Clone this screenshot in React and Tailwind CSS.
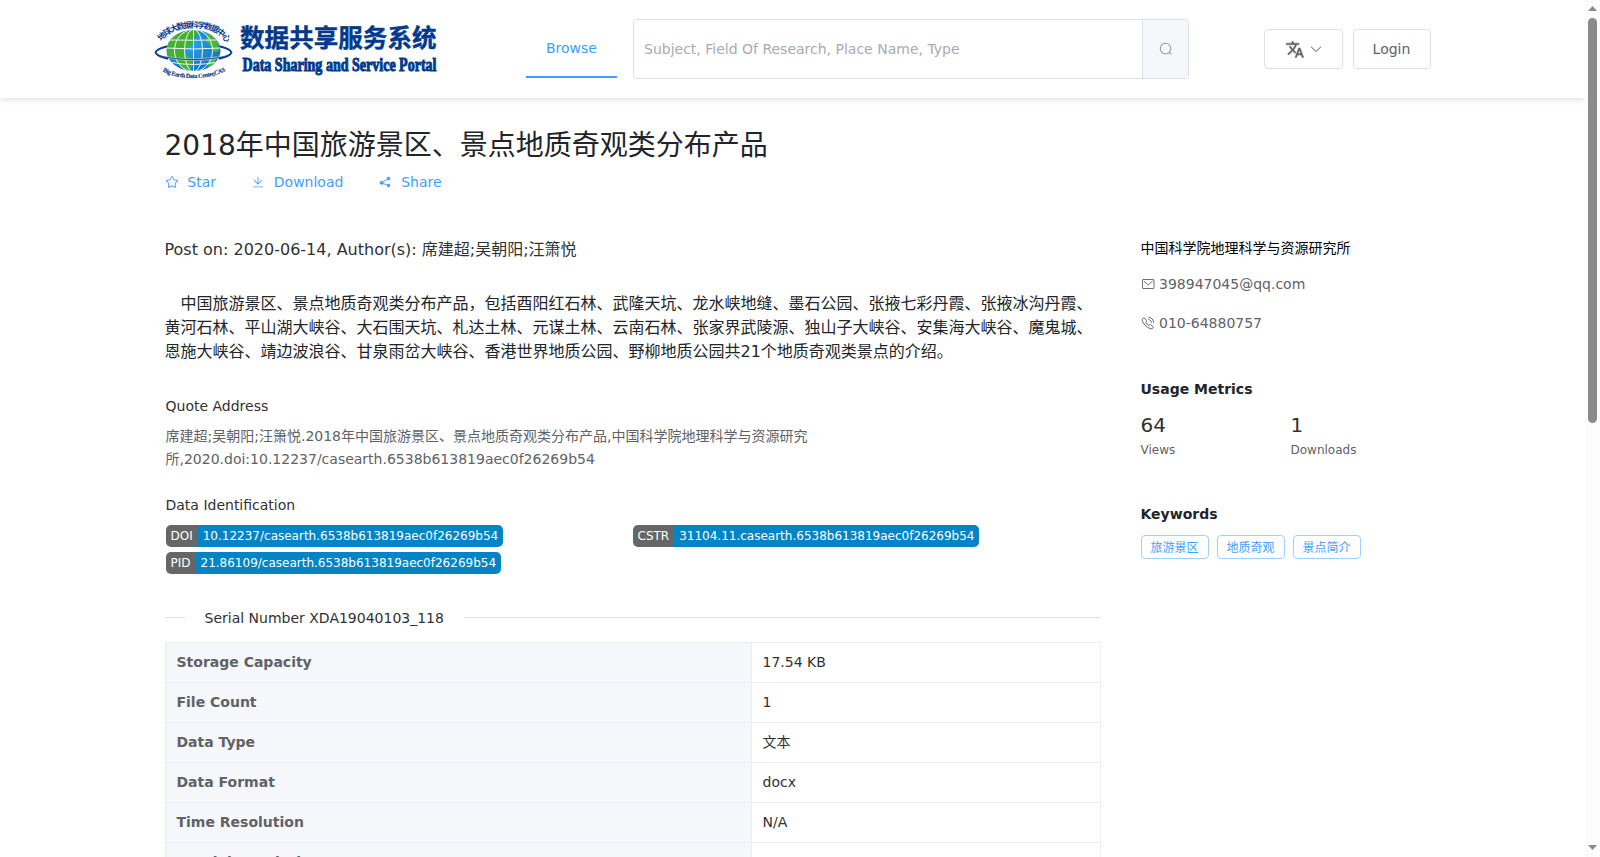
import React from "react";

const paths = {
  search:
    "m795.904 750.72 124.992 124.928a32 32 0 0 1-45.248 45.248L750.656 795.904a416 416 0 1 1 45.248-45.248zM480 832a352 352 0 1 0 0-704 352 352 0 0 0 0 704",
  arrowDown:
    "M831.872 340.864 512 652.672 192.128 340.864a30.592 30.592 0 0 0-42.752 0 29.12 29.12 0 0 0 0 41.6L489.664 714.24a32 32 0 0 0 44.672 0l340.288-331.712a29.12 29.12 0 0 0 0-41.728 30.592 30.592 0 0 0-42.752 0z",
  star:
    "m512 747.84 228.16 119.936a6.4 6.4 0 0 0 9.28-6.72l-43.52-254.08 184.512-179.904a6.4 6.4 0 0 0-3.52-10.88l-255.104-37.12L517.76 147.904a6.4 6.4 0 0 0-11.52 0L392.192 379.072l-255.104 37.12a6.4 6.4 0 0 0-3.52 10.88L318.08 606.976l-43.584 254.08a6.4 6.4 0 0 0 9.28 6.72zM313.6 924.48a70.4 70.4 0 0 1-102.144-74.24l37.888-220.928L88.96 472.96A70.4 70.4 0 0 1 128 352.896l221.76-32.256 99.2-200.96a70.4 70.4 0 0 1 126.208 0l99.2 200.96 221.824 32.256a70.4 70.4 0 0 1 39.04 120.064L774.72 629.376l37.888 220.928a70.4 70.4 0 0 1-102.144 74.24L512 820.096l-198.4 104.32z",
  download:
    "M160 832h704a32 32 0 1 1 0 64H160a32 32 0 1 1 0-64m384-253.696 236.288-236.352 45.248 45.248L508.8 704 192 387.2l45.248-45.248L480 584.704V128h64z",
  share:
    "m679.872 348.8-301.76 188.608a127.808 127.808 0 0 1 5.12 52.16l279.936 104.96a128 128 0 1 1-22.464 59.904l-279.872-104.96a128 128 0 1 1-16.64-166.272l301.696-188.608a128 128 0 1 1 33.92 54.272z",
};

function Icon({ name, className = "size-3.5" }) {
  return (
    <svg viewBox="0 0 1024 1024" fill="currentColor" className={className}>
      <path d={paths[name]} />
    </svg>
  );
}

function Logo() {
  return (
    <svg width="286" height="66" viewBox="0 0 286 66" className="shrink-0 overflow-visible">
      <defs>
        <clipPath id="globe">
          <ellipse cx="39.500" cy="34.500" rx="27" ry="20.500" />
        </clipPath>
        <radialGradient id="sea" cx="0.4" cy="0.35" r="0.75">
          <stop offset="0" stopColor="#2fa6e6" />
          <stop offset="1" stopColor="#0b6fc0" />
        </radialGradient>
        <path id="arcTop" d="M7.500 26 C17 7 62 7 71.500 26" />
        <path id="arcBottom" d="M7.500 54.500 C22 64.500 56 64.500 72 54.500" />
      </defs>
      <path d="M1.500 36 C4 32.500 9 31 16 30 M77.500 36 C75 32.500 70 31 63 30" fill="none" stroke="#0a3d8c" strokeWidth="1.800" />
      <ellipse cx="39.500" cy="34.500" rx="27" ry="20.500" fill="url(#sea)" />
      <g clipPath="url(#globe)">
        <path d="M13 40 L13 30 L17 20 L24 14 L40 13 L45 17 L38 22 L42 25 L36 29 L33 33 L28 35 L33 39 L39 44 L38 51 L34 55 L26 50 L22 43z" fill="#46b02e" />
        <path d="M51 17 l7 2 6 8 1 8 -5 1 -3 -6 -5 -4 1 -5z" fill="#4db82f" />
        <path d="M55 42 l8 -2 -3 8 -6 3z" fill="#58bd2b" />
        <g fill="none" stroke="#e8f6ff" strokeWidth="1">
          <ellipse cx="39.500" cy="34.500" rx="9" ry="21" />
          <ellipse cx="39.500" cy="34.500" rx="19" ry="21" />
          <path d="M39.500 13v44M12 32Q39.500 34 67 32M16 24Q39.500 24.500 63 24M15 46Q39.500 51 64 46" />
        </g>
      </g>
      <path
        d="M1 36 C1 40.500 18 44.400 39.500 44.400 C61 44.400 78 40.500 78 36 C76 39.500 60 42.600 39.500 42.600 C19 42.600 3 39.500 1 36z"
        fill="#0a3d8c"
        stroke="#fff"
        strokeWidth="0.5"
      />
      <path d="M1.200 36 C3 40.500 10 42 14 42.700 M77.800 36 C76 40.500 69 42 65 42.700" fill="none" stroke="#0a3d8c" strokeWidth="2" />
      <text fill="#0a3d8c" fontSize="8.200" fontWeight="700" fontFamily="'Noto Sans CJK SC', sans-serif">
        <textPath href="#arcTop" textLength="74" startOffset="0.500">地球大数据科学数据中心</textPath>
      </text>
      <text fill="#0a3d8c" stroke="#0a3d8c" strokeWidth="0.15" fontSize="6.200" fontWeight="700" fontFamily="'Liberation Serif', serif">
        <textPath href="#arcBottom" textLength="65" startOffset="1.500">Big Earth Data Center,CAS</textPath>
      </text>
      <text x="86" y="31.300" fill="#003a8c" stroke="#003a8c" strokeWidth="0.4" fontSize="24.500" fontWeight="700" textLength="196.500" fontFamily="'Noto Sans CJK SC', sans-serif">
        数据共享服务系统
      </text>
      <text x="88.500" y="54.600" fill="#003a8c" stroke="#003a8c" strokeWidth="1" fontSize="18" fontWeight="700" textLength="194" lengthAdjust="spacingAndGlyphs" fontFamily="'Liberation Serif', serif">
        Data Sharing and Service Portal
      </text>
    </svg>
  );
}

function Header() {
  return (
    <header className="flex h-[98px] shrink-0 items-center bg-white pl-[154px] shadow-[0_2px_6px_rgba(0,0,0,0.12)]">
      <Logo />
      <a className="ml-[86px] flex h-[58px] w-[91px] items-center justify-center border-b-2 border-[#409eff] text-sm text-[#409eff]">
        Browse
      </a>
      <div className="ml-4 flex h-[60px] w-[556px] rounded-[4px] border border-[#dcdfe6]">
        <div className="flex grow items-center pl-2.5 text-sm text-[#a8abb2]">
          Subject, Field Of Research, Place Name, Type
        </div>
        <div className="flex w-[46px] items-center justify-center rounded-r-[3px] border-l border-[#dcdfe6] bg-[#f5f7fa] text-[#909399]">
          <Icon name="search" />
        </div>
      </div>
      <button className="ml-[75px] flex h-10 w-[79px] items-center justify-center gap-1 rounded-[4px] border border-[#dcdfe6] text-[#606266]">
        <svg viewBox="0 0 24 24" fill="currentColor" stroke="currentColor" strokeWidth="0.6" className="h-[19px] w-5">
          <path d="M12.87 15.07l-2.54-2.51.03-.03c1.74-1.94 2.98-4.17 3.71-6.53H17V4h-7V2H8v2H1v1.99h11.17C11.5 7.92 10.44 9.75 9 11.35 8.07 10.32 7.3 9.19 6.69 8h-2c.73 1.63 1.73 3.17 2.98 4.56l-5.09 5.02L4 19l5-5 3.11 3.11.76-2.04zM18.5 10h-2L12 22h2l1.12-3h4.75L21 22h2l-4.5-12zm-2.62 7l1.62-4.33L19.12 17h-3.24z" />
        </svg>
        <Icon name="arrowDown" />
      </button>
      <button className="ml-2.5 flex h-10 w-[78px] items-center justify-center rounded-[4px] border border-[#dcdfe6] text-sm text-[#606266]">
        <span className="pr-px">Login</span>
      </button>
    </header>
  );
}

function Action({ icon, label }) {
  return (
    <a className="flex items-center gap-[8.8px] text-sm leading-5 text-[#409eff]">
      <Icon name={icon} />
      {label}
    </a>
  );
}

function Badge({ label, value }) {
  return (
    <div className="flex h-[22px] w-fit overflow-hidden rounded-[5px] text-xs leading-[22px] text-white">
      <span className="bg-[#666] px-[5px]">{label}</span>
      <span className="bg-[#0484c4] px-[5px]">{value}</span>
    </div>
  );
}

const rows = [
  ["Storage Capacity", "17.54 KB"],
  ["File Count", "1"],
  ["Data Type", "文本"],
  ["Data Format", "docx"],
  ["Time Resolution", "N/A"],
  ["Spatial Resolution", ""],
];

const description = [
  "中国旅游景区、景点地质奇观类分布产品，包括酉阳红石林、武隆天坑、龙水峡地缝、墨石公园、张掖七彩丹霞、张掖冰沟丹霞、",
  "黄河石林、平山湖大峡谷、大石围天坑、札达土林、元谋土林、云南石林、张家界武陵源、独山子大峡谷、安集海大峡谷、魔鬼城、",
  "恩施大峡谷、靖边波浪谷、甘泉雨岔大峡谷、香港世界地质公园、野柳地质公园共21个地质奇观类景点的介绍。",
];

function Main() {
  return (
    <main className="w-[936px] shrink-0">
      <p className="mt-[21px] text-base leading-6 text-[#303133]">
        Post on: 2020-06-14, Author(s): 席建超;吴朝阳;汪箫悦
      </p>
      <div className="mt-[30px] text-base leading-6 whitespace-nowrap text-[#212529]">
        {description.map((line, i) => (
          <p key={i} className="first:pl-4">
            {line}
          </p>
        ))}
      </div>
      <div className="pl-px">
        <h4 className="mt-8 text-sm leading-[21px] text-[#303133]">Quote Address</h4>
        <p className="mt-2 text-sm leading-[23px] text-[#606266]">
          席建超;吴朝阳;汪箫悦.2018年中国旅游景区、景点地质奇观类分布产品,中国科学院地理科学与资源研究
          <br />
          所,2020.doi:10.12237/casearth.6538b613819aec0f26269b54
        </p>
        <h4 className="mt-6 text-sm leading-[21px] text-[#303133]">Data Identification</h4>
        <div className="mt-[9px] grid grid-cols-[467px_1fr] gap-y-[5px]">
          <Badge label="DOI" value="10.12237/casearth.6538b613819aec0f26269b54" />
          <Badge label="CSTR" value="31104.11.casearth.6538b613819aec0f26269b54" />
          <Badge label="PID" value="21.86109/casearth.6538b613819aec0f26269b54" />
        </div>
      </div>
      <div className="mt-[33px] flex h-5 items-center gap-5 text-sm text-[#303133]">
        <span className="h-px w-5 bg-[#dcdfe6]" />
        <span className="pt-px">Serial Number XDA19040103_118</span>
        <span className="h-px grow bg-[#dcdfe6]" />
      </div>
      <div className="mt-[15px] border-t border-l border-[#ebeef5] text-sm">
        {rows.map(([name, value]) => (
          <div key={name} className="flex h-10 border-b border-[#ebeef5]">
            <div className="flex w-[586px] items-center border-r border-[#ebeef5] bg-[#f5f7fa] pb-0.5 pl-[11px] font-bold text-[#606266]">
              {name}
            </div>
            <div className="flex grow items-center border-r border-[#ebeef5] pb-0.5 pl-[11px] text-[#303133]">{value}</div>
          </div>
        ))}
      </div>
    </main>
  );
}

function Aside() {
  return (
    <aside className="ml-10 w-[290px] text-sm">
      <p className="mt-[19px] leading-6 text-black">中国科学院地理科学与资源研究所</p>
      <p className="mt-[14px] flex items-center gap-[4.5px] leading-5 text-[#606266]">
        <svg viewBox="0 0 14 14" fill="none" stroke="currentColor" strokeWidth="0.9" className="size-3.5">
          <rect x="1.500" y="2.500" width="11.500" height="9" rx="0.5" />
          <path d="M2.800 4L7.200 8l4.500-4" />
        </svg>
        398947045@qq.com
      </p>
      <p className="mt-[19px] flex items-center gap-[4.5px] leading-5 text-[#606266]">
        <svg viewBox="0 0 14 14" fill="none" stroke="currentColor" className="size-3.5">
          <path d="M3.400 2L5.500 4.500c.3.5.2.9-.2 1.300l-.5.5c.8 1.400 1.800 2.400 3.100 3.200l.6-.6c.4-.4.8-.5 1.200-.2l2.500 2.100c.3.300.3.600 0 .9-.9 1-1.900 1.300-3.200.8C5.700 11.300 2.800 8.400 1.500 5.200 1 3.800 1.300 2.900 2.200 2.100c.3-.3.9-.4 1.200-.1z" />
          <path d="M7.300 3.500c1.800.2 3 1.400 3.200 3.200M7.500 1.300c2.900.2 4.900 2.200 5.200 5.200" />
        </svg>
        010-64880757
      </p>
      <h4 className="mt-[46px] leading-5 font-bold text-[#212529]">Usage Metrics</h4>
      <div className="mt-3 flex">
        <div className="w-[150px]">
          <div className="text-xl leading-7 text-[#303133]">64</div>
          <div className="mt-px text-xs leading-5 text-[#606266]">Views</div>
        </div>
        <div>
          <div className="text-xl leading-7 text-[#303133]">1</div>
          <div className="mt-px text-xs leading-5 text-[#606266]">Downloads</div>
        </div>
      </div>
      <h4 className="mt-11 leading-5 font-bold text-[#212529]">Keywords</h4>
      <div className="mt-[11px] flex gap-2">
        {["旅游景区", "地质奇观", "景点简介"].map((k) => (
          <span key={k} className="flex h-6 w-[68px] items-center justify-center rounded-[4px] border border-[#a0cfff] pt-px text-xs text-[#409eff]">
            {k}
          </span>
        ))}
      </div>
    </aside>
  );
}

export default function App() {
  return (
    <div className="flex h-[857px] w-[1600px] overflow-hidden bg-white font-['DejaVu_Sans','Noto_Sans_CJK_SC',sans-serif]">
      <div className="flex h-full w-[1585px] flex-col overflow-hidden">
        <Header />
        <div className="pl-[164.5px]">
          <h1 className="mt-7 text-[28px] leading-10 text-[#212529]">2018年中国旅游景区、景点地质奇观类分布产品</h1>
          <div className="mt-1.5 flex h-5 gap-[35px]">
            <Action icon="star" label="Star" />
            <Action icon="download" label="Download" />
            <Action icon="share" label="Share" />
          </div>
          <div className="mt-[25px] flex">
            <Main />
            <Aside />
          </div>
        </div>
      </div>
      <div className="flex w-[15px] flex-col items-center bg-[#fcfcfc] pt-1.5">
        <svg width="9" height="5" className="shrink-0">
          <path d="M0 5L4.500 0L9 5z" fill="#8b8b8b" />
        </svg>
        <div className="mt-[7px] h-[405px] w-[9px] rounded-full bg-[#8b8b8b]" />
        <svg width="9" height="5" className="mt-auto mb-[7px] shrink-0">
          <path d="M0 0L4.500 5L9 0z" fill="#8b8b8b" />
        </svg>
      </div>
    </div>
  );
}
